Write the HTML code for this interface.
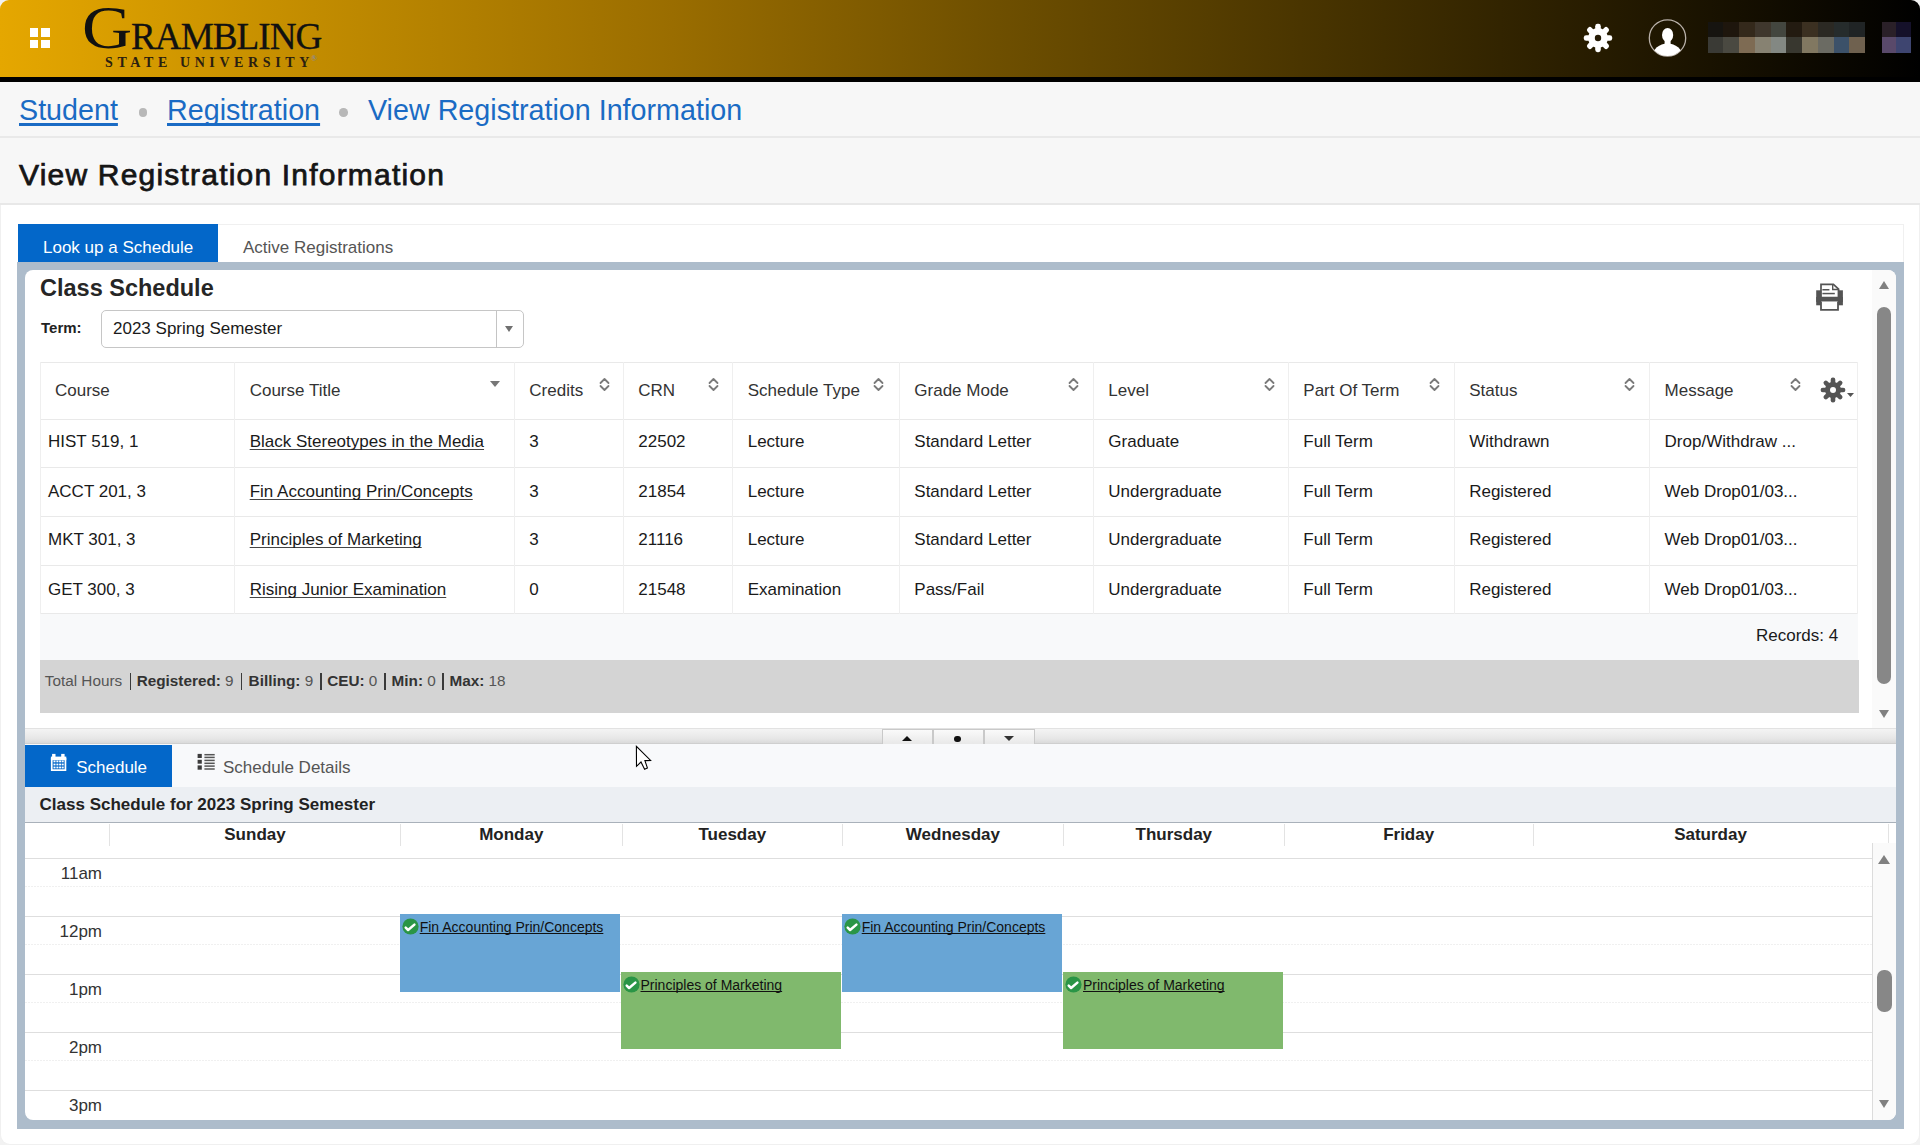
<!DOCTYPE html>
<html><head><meta charset="utf-8">
<style>
*{box-sizing:border-box;margin:0;padding:0}
html,body{width:1920px;height:1145px;overflow:hidden;background:#f2f2f2;font-family:"Liberation Sans",sans-serif}
.a{position:absolute}
#hdr{left:0;top:0;width:1920px;height:77px;border-radius:9px 9px 0 0;background:linear-gradient(90deg,#e5a700 0%,#9a6d00 35%,#6e4f00 52%,#000 100%)}
#hdr i{position:absolute;width:16.05px;height:15.6px}
#blk{left:0;top:77px;width:1920px;height:5px;background:#000}
#bc{left:0;top:82px;width:1920px;height:56px;background:#f7f7f7;border-bottom:2px solid #e9e9e9}
#ttl{left:0;top:138px;width:1920px;height:67px;background:#f7f7f7;border-bottom:2px solid #e8e8e8}
#cont{left:0;top:205px;width:1920px;height:940px;background:#fff;border:1px solid #f0f0f0;border-top:none;border-radius:0 0 10px 10px}
.sq{position:absolute;width:8.5px;height:8.5px;background:#fff}
.serif{font-family:"Liberation Serif",serif}
.lnk{text-decoration:underline;text-decoration-thickness:2.6px;text-underline-offset:2.5px}
.dot{display:inline-block;width:9px;height:9px;border-radius:50%;background:#b5b5b5;vertical-align:middle}
#tabs{left:18px;top:224px;width:1886px;height:38px;border:1px solid #f0f0f0;border-bottom:none;background:#fff}
.tab{position:absolute;top:0;height:38px;font-size:17px;line-height:38px;white-space:nowrap}
#frame{left:17px;top:262px;width:1887px;height:866.5px;background:#adbccb}
#top{left:25px;top:270px;width:1871px;height:458px;background:#fff;border-radius:8px 8px 0 0;overflow:hidden}
#bot{left:25px;top:744px;width:1871px;height:376px;background:#fff;border-radius:0 0 8px 8px;overflow:hidden}

.t{position:absolute;white-space:nowrap;text-decoration-skip-ink:none}
.u{text-decoration:underline;text-decoration-thickness:1px;text-underline-offset:2px}
</style></head><body>
<div id="hdr" class="a">
<div class="sq" style="left:29.5px;top:28px"></div><div class="sq" style="left:41px;top:28px"></div><div class="sq" style="left:29.5px;top:39.8px"></div><div class="sq" style="left:41px;top:39.8px"></div>
<div class="a serif" style="left:81.5px;top:-4px;font-size:62px;line-height:62px;color:#111;transform:scaleX(1.12);transform-origin:0 0">G</div>
<div class="a serif" style="left:131px;top:17px;font-size:37.2px;line-height:40px;color:#111;letter-spacing:-1px;-webkit-text-stroke:0.3px #111">RAMBLING</div>
<div class="a serif" style="left:105px;top:56px;font-size:14px;line-height:14px;color:#2a2010;letter-spacing:4.6px;font-weight:bold;white-space:nowrap">STATE UNIVERSITY<span style="position:absolute;left:206px;top:-1px;font-size:8px;line-height:8px;letter-spacing:0;color:#8a8a9a">&reg;</span></div>
<svg class="a" style="left:1583px;top:23px" width="30" height="30" viewBox="0 0 30 30"><g fill="#fff"><circle cx="15" cy="15" r="9.9"/><g id="tooth"><rect x="12.2" y="0.8" width="5.6" height="8" rx="2.4"/></g><use href="#tooth" transform="rotate(45 15 15)"/><use href="#tooth" transform="rotate(90 15 15)"/><use href="#tooth" transform="rotate(135 15 15)"/><use href="#tooth" transform="rotate(180 15 15)"/><use href="#tooth" transform="rotate(225 15 15)"/><use href="#tooth" transform="rotate(270 15 15)"/><use href="#tooth" transform="rotate(315 15 15)"/></g><circle cx="15" cy="15" r="3.2" fill="#261c06"/></svg>
<svg class="a" style="left:1648px;top:19px" width="39" height="39" viewBox="0 0 39 39"><defs><clipPath id="uc"><circle cx="19.5" cy="19" r="18"/></clipPath></defs><circle cx="19.5" cy="19" r="18.2" fill="none" stroke="#b8b0a8" stroke-width="1.3"/><g clip-path="url(#uc)" fill="#fff"><ellipse cx="19.6" cy="16" rx="5.6" ry="6.9"/><rect x="16.6" y="19" width="6" height="7.5"/><ellipse cx="19.5" cy="37.5" rx="15" ry="13"/></g></svg>
<i style="left:1707.50px;top:21.5px;background:#161410"></i><i style="left:1707.50px;top:37px;background:#3a3a35"></i><i style="left:1723.25px;top:21.5px;background:#1e160d"></i><i style="left:1723.25px;top:37px;background:#4a4941"></i><i style="left:1739.00px;top:21.5px;background:#34291b"></i><i style="left:1739.00px;top:37px;background:#7e6b53"></i><i style="left:1754.75px;top:21.5px;background:#3f372d"></i><i style="left:1754.75px;top:37px;background:#878272"></i><i style="left:1770.50px;top:21.5px;background:#43463f"></i><i style="left:1770.50px;top:37px;background:#838883"></i><i style="left:1786.25px;top:21.5px;background:#231b11"></i><i style="left:1786.25px;top:37px;background:#38372f"></i><i style="left:1802.00px;top:21.5px;background:#3b3021"></i><i style="left:1802.00px;top:37px;background:#817861"></i><i style="left:1817.75px;top:21.5px;background:#2b2923"></i><i style="left:1817.75px;top:37px;background:#6b6b63"></i><i style="left:1833.50px;top:21.5px;background:#262c2c"></i><i style="left:1833.50px;top:37px;background:#3c5169"></i><i style="left:1849.25px;top:21.5px;background:#202425"></i><i style="left:1849.25px;top:37px;background:#6f614f"></i><i style="left:1881.50px;top:21.5px;width:14.8px;background:#2a2028"></i><i style="left:1881.50px;top:37px;width:14.8px;background:#59496a"></i><i style="left:1896.00px;top:21.5px;width:14.8px;background:#15112a"></i><i style="left:1896.00px;top:37px;width:14.8px;background:#3e4570"></i>
</div>
<div id="blk" class="a"></div><div id="bc" class="a"></div><div id="ttl" class="a"></div><div id="cont" class="a"></div>
<div class="t " style="left:19.00px;top:95.71px;font-size:28.7px;line-height:28.7px;font-weight:normal;color:#1a6bc4;"><span class="lnk">Student</span></div>
<div class="t " style="left:167.00px;top:95.71px;font-size:28.7px;line-height:28.7px;font-weight:normal;color:#1a6bc4;"><span class="lnk">Registration</span></div>
<div class="t " style="left:368.00px;top:95.71px;font-size:28.7px;line-height:28.7px;font-weight:normal;color:#1a6bc4;">View Registration Information</div>
<div class="a" style="left:138.70px;top:108.20px;width:8.60px;height:8.60px;background:#b8b8b8;border-radius:50%"></div>
<div class="a" style="left:339.20px;top:108.20px;width:8.60px;height:8.60px;background:#b8b8b8;border-radius:50%"></div>
<div class="t " style="left:19.00px;top:159.60px;font-size:30px;line-height:30px;font-weight:normal;color:#151515;-webkit-text-stroke:0.75px #151515;letter-spacing:1.2px">View Registration Information</div>
<div id="tabs" class="a"></div>
<div class="a" style="left:18.00px;top:224.00px;width:200.00px;height:38.00px;background:#0367c9"></div>
<div class="t " style="left:43.00px;top:238.91px;font-size:17px;line-height:17px;font-weight:normal;color:#fff;">Look up a Schedule</div>
<div class="t " style="left:243.00px;top:238.91px;font-size:17px;line-height:17px;font-weight:normal;color:#555;">Active Registrations</div>
<div id="frame" class="a"></div>
<div id="top" class="a"></div>
<div id="bot" class="a"></div>
<div class="t " style="left:40.00px;top:276.81px;font-size:23.5px;line-height:23.5px;font-weight:bold;color:#262626;">Class Schedule</div>
<div class="t " style="left:41.00px;top:320.10px;font-size:15px;line-height:15px;font-weight:bold;color:#222;">Term:</div>
<div class="a" style="left:101.00px;top:310.00px;width:422.50px;height:38.00px;border:1px solid #c6c6c6;border-radius:5px;background:#fff"></div>
<div class="a" style="left:495.90px;top:310.50px;width:1.10px;height:37.00px;background:#c4c4c4"></div>
<div class="a" style="left:505.3px;top:325.5px;width:0;height:0;border-left:4.3px solid transparent;border-right:4.3px solid transparent;border-top:6.8px solid #707070"></div>
<div class="t " style="left:113.00px;top:319.91px;font-size:17px;line-height:17px;font-weight:normal;color:#1a1a1a;">2023 Spring Semester</div>
<svg class="a" style="left:1805px;top:275px" width="50" height="45" viewBox="0 0 50 45"><g fill="#545454"><rect x="11.2" y="15.3" width="5" height="15"/><rect x="32.8" y="15.3" width="5.1" height="15"/><rect x="11.2" y="22" width="26.7" height="4.9"/><rect x="17.4" y="14" width="7" height="1.5"/><rect x="17.4" y="17.8" width="12.4" height="1.5"/></g><path d="M16 9.3H28.4L33.6 14.1V22.5H16Z" fill="none" stroke="#545454" stroke-width="1.7"/><path d="M27.7 9.5V14.5H33.4" fill="none" stroke="#545454" stroke-width="1.4"/><path d="M16 26.5V34.8H33V26.5" fill="#fff" stroke="#545454" stroke-width="1.8"/></svg>
<div class="a" style="left:40.00px;top:362.00px;width:1817.00px;height:251.50px;background:#fff"></div>
<div class="a" style="left:40.00px;top:361.80px;width:1817.00px;height:1.00px;background:#e9e9e9"></div>
<div class="a" style="left:40.00px;top:418.50px;width:1817.00px;height:1.00px;background:#e9e9e9"></div>
<div class="a" style="left:40.00px;top:466.80px;width:1817.00px;height:1.00px;background:#e9e9e9"></div>
<div class="a" style="left:40.00px;top:516.20px;width:1817.00px;height:1.00px;background:#e9e9e9"></div>
<div class="a" style="left:40.00px;top:564.50px;width:1817.00px;height:1.00px;background:#e9e9e9"></div>
<div class="a" style="left:40.00px;top:612.80px;width:1817.00px;height:1.00px;background:#e9e9e9"></div>
<div class="a" style="left:39.50px;top:362.00px;width:1.00px;height:251.50px;background:#efefef"></div>
<div class="a" style="left:234.20px;top:362.00px;width:1.00px;height:251.50px;background:#efefef"></div>
<div class="a" style="left:513.80px;top:362.00px;width:1.00px;height:251.50px;background:#efefef"></div>
<div class="a" style="left:622.80px;top:362.00px;width:1.00px;height:251.50px;background:#efefef"></div>
<div class="a" style="left:732.20px;top:362.00px;width:1.00px;height:251.50px;background:#efefef"></div>
<div class="a" style="left:898.80px;top:362.00px;width:1.00px;height:251.50px;background:#efefef"></div>
<div class="a" style="left:1092.80px;top:362.00px;width:1.00px;height:251.50px;background:#efefef"></div>
<div class="a" style="left:1287.80px;top:362.00px;width:1.00px;height:251.50px;background:#efefef"></div>
<div class="a" style="left:1453.70px;top:362.00px;width:1.00px;height:251.50px;background:#efefef"></div>
<div class="a" style="left:1649.10px;top:362.00px;width:1.00px;height:251.50px;background:#efefef"></div>
<div class="a" style="left:1856.50px;top:362.00px;width:1.00px;height:251.50px;background:#efefef"></div>
<div class="t " style="left:55.00px;top:382.31px;font-size:17px;line-height:17px;font-weight:normal;color:#333;">Course</div>
<div class="t " style="left:249.70px;top:382.31px;font-size:17px;line-height:17px;font-weight:normal;color:#333;">Course Title</div>
<div class="t " style="left:529.30px;top:382.31px;font-size:17px;line-height:17px;font-weight:normal;color:#333;">Credits</div>
<div class="t " style="left:638.30px;top:382.31px;font-size:17px;line-height:17px;font-weight:normal;color:#333;">CRN</div>
<div class="t " style="left:747.70px;top:382.31px;font-size:17px;line-height:17px;font-weight:normal;color:#333;">Schedule Type</div>
<div class="t " style="left:914.30px;top:382.31px;font-size:17px;line-height:17px;font-weight:normal;color:#333;">Grade Mode</div>
<div class="t " style="left:1108.30px;top:382.31px;font-size:17px;line-height:17px;font-weight:normal;color:#333;">Level</div>
<div class="t " style="left:1303.30px;top:382.31px;font-size:17px;line-height:17px;font-weight:normal;color:#333;">Part Of Term</div>
<div class="t " style="left:1469.20px;top:382.31px;font-size:17px;line-height:17px;font-weight:normal;color:#333;">Status</div>
<div class="t " style="left:1664.60px;top:382.31px;font-size:17px;line-height:17px;font-weight:normal;color:#333;">Message</div>
<div class="t " style="left:48.00px;top:433.31px;font-size:17px;line-height:17px;font-weight:normal;color:#1a1a1a;">HIST 519, 1</div>
<div class="t " style="left:249.70px;top:433.31px;font-size:17px;line-height:17px;font-weight:normal;color:#1a1a1a;text-decoration:underline;text-underline-offset:1.5px;text-decoration-color:#444">Black Stereotypes in the Media</div>
<div class="t " style="left:529.30px;top:433.31px;font-size:17px;line-height:17px;font-weight:normal;color:#1a1a1a;">3</div>
<div class="t " style="left:638.30px;top:433.31px;font-size:17px;line-height:17px;font-weight:normal;color:#1a1a1a;">22502</div>
<div class="t " style="left:747.70px;top:433.31px;font-size:17px;line-height:17px;font-weight:normal;color:#1a1a1a;">Lecture</div>
<div class="t " style="left:914.30px;top:433.31px;font-size:17px;line-height:17px;font-weight:normal;color:#1a1a1a;">Standard Letter</div>
<div class="t " style="left:1108.30px;top:433.31px;font-size:17px;line-height:17px;font-weight:normal;color:#1a1a1a;">Graduate</div>
<div class="t " style="left:1303.30px;top:433.31px;font-size:17px;line-height:17px;font-weight:normal;color:#1a1a1a;">Full Term</div>
<div class="t " style="left:1469.20px;top:433.31px;font-size:17px;line-height:17px;font-weight:normal;color:#1a1a1a;">Withdrawn</div>
<div class="t " style="left:1664.60px;top:433.31px;font-size:17px;line-height:17px;font-weight:normal;color:#1a1a1a;">Drop/Withdraw ...</div>
<div class="t " style="left:48.00px;top:483.11px;font-size:17px;line-height:17px;font-weight:normal;color:#1a1a1a;">ACCT 201, 3</div>
<div class="t " style="left:249.70px;top:483.11px;font-size:17px;line-height:17px;font-weight:normal;color:#1a1a1a;text-decoration:underline;text-underline-offset:1.5px;text-decoration-color:#444">Fin Accounting Prin/Concepts</div>
<div class="t " style="left:529.30px;top:483.11px;font-size:17px;line-height:17px;font-weight:normal;color:#1a1a1a;">3</div>
<div class="t " style="left:638.30px;top:483.11px;font-size:17px;line-height:17px;font-weight:normal;color:#1a1a1a;">21854</div>
<div class="t " style="left:747.70px;top:483.11px;font-size:17px;line-height:17px;font-weight:normal;color:#1a1a1a;">Lecture</div>
<div class="t " style="left:914.30px;top:483.11px;font-size:17px;line-height:17px;font-weight:normal;color:#1a1a1a;">Standard Letter</div>
<div class="t " style="left:1108.30px;top:483.11px;font-size:17px;line-height:17px;font-weight:normal;color:#1a1a1a;">Undergraduate</div>
<div class="t " style="left:1303.30px;top:483.11px;font-size:17px;line-height:17px;font-weight:normal;color:#1a1a1a;">Full Term</div>
<div class="t " style="left:1469.20px;top:483.11px;font-size:17px;line-height:17px;font-weight:normal;color:#1a1a1a;">Registered</div>
<div class="t " style="left:1664.60px;top:483.11px;font-size:17px;line-height:17px;font-weight:normal;color:#1a1a1a;">Web Drop01/03...</div>
<div class="t " style="left:48.00px;top:531.11px;font-size:17px;line-height:17px;font-weight:normal;color:#1a1a1a;">MKT 301, 3</div>
<div class="t " style="left:249.70px;top:531.11px;font-size:17px;line-height:17px;font-weight:normal;color:#1a1a1a;text-decoration:underline;text-underline-offset:1.5px;text-decoration-color:#444">Principles of Marketing</div>
<div class="t " style="left:529.30px;top:531.11px;font-size:17px;line-height:17px;font-weight:normal;color:#1a1a1a;">3</div>
<div class="t " style="left:638.30px;top:531.11px;font-size:17px;line-height:17px;font-weight:normal;color:#1a1a1a;">21116</div>
<div class="t " style="left:747.70px;top:531.11px;font-size:17px;line-height:17px;font-weight:normal;color:#1a1a1a;">Lecture</div>
<div class="t " style="left:914.30px;top:531.11px;font-size:17px;line-height:17px;font-weight:normal;color:#1a1a1a;">Standard Letter</div>
<div class="t " style="left:1108.30px;top:531.11px;font-size:17px;line-height:17px;font-weight:normal;color:#1a1a1a;">Undergraduate</div>
<div class="t " style="left:1303.30px;top:531.11px;font-size:17px;line-height:17px;font-weight:normal;color:#1a1a1a;">Full Term</div>
<div class="t " style="left:1469.20px;top:531.11px;font-size:17px;line-height:17px;font-weight:normal;color:#1a1a1a;">Registered</div>
<div class="t " style="left:1664.60px;top:531.11px;font-size:17px;line-height:17px;font-weight:normal;color:#1a1a1a;">Web Drop01/03...</div>
<div class="t " style="left:48.00px;top:580.91px;font-size:17px;line-height:17px;font-weight:normal;color:#1a1a1a;">GET 300, 3</div>
<div class="t " style="left:249.70px;top:580.91px;font-size:17px;line-height:17px;font-weight:normal;color:#1a1a1a;text-decoration:underline;text-underline-offset:1.5px;text-decoration-color:#444">Rising Junior Examination</div>
<div class="t " style="left:529.30px;top:580.91px;font-size:17px;line-height:17px;font-weight:normal;color:#1a1a1a;">0</div>
<div class="t " style="left:638.30px;top:580.91px;font-size:17px;line-height:17px;font-weight:normal;color:#1a1a1a;">21548</div>
<div class="t " style="left:747.70px;top:580.91px;font-size:17px;line-height:17px;font-weight:normal;color:#1a1a1a;">Examination</div>
<div class="t " style="left:914.30px;top:580.91px;font-size:17px;line-height:17px;font-weight:normal;color:#1a1a1a;">Pass/Fail</div>
<div class="t " style="left:1108.30px;top:580.91px;font-size:17px;line-height:17px;font-weight:normal;color:#1a1a1a;">Undergraduate</div>
<div class="t " style="left:1303.30px;top:580.91px;font-size:17px;line-height:17px;font-weight:normal;color:#1a1a1a;">Full Term</div>
<div class="t " style="left:1469.20px;top:580.91px;font-size:17px;line-height:17px;font-weight:normal;color:#1a1a1a;">Registered</div>
<div class="t " style="left:1664.60px;top:580.91px;font-size:17px;line-height:17px;font-weight:normal;color:#1a1a1a;">Web Drop01/03...</div>
<svg class="a" style="left:599.00px;top:376.70px" width="11" height="15" viewBox="0 0 11 15"><path d="M1.5 6 5.5 2 9.5 6M1.5 9 5.5 13 9.5 9" fill="none" stroke="#7a7a7a" stroke-width="1.8" stroke-linecap="round" stroke-linejoin="round"/></svg>
<svg class="a" style="left:708.00px;top:376.70px" width="11" height="15" viewBox="0 0 11 15"><path d="M1.5 6 5.5 2 9.5 6M1.5 9 5.5 13 9.5 9" fill="none" stroke="#7a7a7a" stroke-width="1.8" stroke-linecap="round" stroke-linejoin="round"/></svg>
<svg class="a" style="left:873.30px;top:376.70px" width="11" height="15" viewBox="0 0 11 15"><path d="M1.5 6 5.5 2 9.5 6M1.5 9 5.5 13 9.5 9" fill="none" stroke="#7a7a7a" stroke-width="1.8" stroke-linecap="round" stroke-linejoin="round"/></svg>
<svg class="a" style="left:1068.30px;top:376.70px" width="11" height="15" viewBox="0 0 11 15"><path d="M1.5 6 5.5 2 9.5 6M1.5 9 5.5 13 9.5 9" fill="none" stroke="#7a7a7a" stroke-width="1.8" stroke-linecap="round" stroke-linejoin="round"/></svg>
<svg class="a" style="left:1264.00px;top:376.70px" width="11" height="15" viewBox="0 0 11 15"><path d="M1.5 6 5.5 2 9.5 6M1.5 9 5.5 13 9.5 9" fill="none" stroke="#7a7a7a" stroke-width="1.8" stroke-linecap="round" stroke-linejoin="round"/></svg>
<svg class="a" style="left:1429.40px;top:376.70px" width="11" height="15" viewBox="0 0 11 15"><path d="M1.5 6 5.5 2 9.5 6M1.5 9 5.5 13 9.5 9" fill="none" stroke="#7a7a7a" stroke-width="1.8" stroke-linecap="round" stroke-linejoin="round"/></svg>
<svg class="a" style="left:1624.40px;top:376.70px" width="11" height="15" viewBox="0 0 11 15"><path d="M1.5 6 5.5 2 9.5 6M1.5 9 5.5 13 9.5 9" fill="none" stroke="#7a7a7a" stroke-width="1.8" stroke-linecap="round" stroke-linejoin="round"/></svg>
<svg class="a" style="left:1789.80px;top:376.70px" width="11" height="15" viewBox="0 0 11 15"><path d="M1.5 6 5.5 2 9.5 6M1.5 9 5.5 13 9.5 9" fill="none" stroke="#7a7a7a" stroke-width="1.8" stroke-linecap="round" stroke-linejoin="round"/></svg>
<div class="a" style="left:490px;top:381px;width:0;height:0;border-left:5.5px solid transparent;border-right:5.5px solid transparent;border-top:6.5px solid #777"></div>
<svg class="a" style="left:1819.5px;top:377px" width="35" height="26" viewBox="0 0 35 26"><g fill="#555"><circle cx="13" cy="13" r="8"/><g id="t2"><rect x="10.7" y="0.6" width="4.6" height="7" rx="2.2"/></g><use href="#t2" transform="rotate(45 13 13)"/><use href="#t2" transform="rotate(90 13 13)"/><use href="#t2" transform="rotate(135 13 13)"/><use href="#t2" transform="rotate(180 13 13)"/><use href="#t2" transform="rotate(225 13 13)"/><use href="#t2" transform="rotate(270 13 13)"/><use href="#t2" transform="rotate(315 13 13)"/><path d="M27 16h7l-3.5 4z"/></g><circle cx="13" cy="13" r="3" fill="#fff"/></svg>
<div class="a" style="left:40.00px;top:613.50px;width:1818.00px;height:47.00px;background:#f8f9fa"></div>
<div class="t " style="left:1756.00px;top:627.31px;font-size:17px;line-height:17px;font-weight:normal;color:#1a1a1a;">Records: 4</div>
<div class="a" style="left:39.50px;top:660.00px;width:1819.00px;height:53.00px;background:#d4d4d4"></div>
<div class="t " style="left:44.80px;top:672.85px;font-size:15.3px;line-height:15.3px;font-weight:normal;color:#555;">Total Hours</div>
<div class="t " style="left:136.70px;top:672.85px;font-size:15.3px;line-height:15.3px;font-weight:normal;color:#555;"><b style="color:#333">Registered:</b> 9</div>
<div class="t " style="left:248.60px;top:672.85px;font-size:15.3px;line-height:15.3px;font-weight:normal;color:#555;"><b style="color:#333">Billing:</b> 9</div>
<div class="t " style="left:327.20px;top:672.85px;font-size:15.3px;line-height:15.3px;font-weight:normal;color:#555;"><b style="color:#333">CEU:</b> 0</div>
<div class="t " style="left:391.60px;top:672.85px;font-size:15.3px;line-height:15.3px;font-weight:normal;color:#555;"><b style="color:#333">Min:</b> 0</div>
<div class="t " style="left:449.50px;top:672.85px;font-size:15.3px;line-height:15.3px;font-weight:normal;color:#555;"><b style="color:#333">Max:</b> 18</div>
<div class="a" style="left:129.70px;top:673.00px;width:1.80px;height:16.50px;background:#3a3a3a"></div>
<div class="a" style="left:240.60px;top:673.00px;width:1.80px;height:16.50px;background:#3a3a3a"></div>
<div class="a" style="left:319.90px;top:673.00px;width:1.80px;height:16.50px;background:#3a3a3a"></div>
<div class="a" style="left:383.90px;top:673.00px;width:1.80px;height:16.50px;background:#3a3a3a"></div>
<div class="a" style="left:442.00px;top:673.00px;width:1.80px;height:16.50px;background:#3a3a3a"></div>
<div class="a" style="left:1872.00px;top:270.00px;width:24.00px;height:458.00px;background:#fafafa;border-radius:0 8px 0 0"></div>
<div class="a" style="left:1878.5px;top:281px;width:0;height:0;border-left:5.7px solid transparent;border-right:5.7px solid transparent;border-bottom:8px solid #808080"></div>
<div class="a" style="left:1877.00px;top:307.00px;width:14.20px;height:376.50px;background:#878787;border-radius:7px"></div>
<div class="a" style="left:1878.5px;top:709.5px;width:0;height:0;border-left:5.7px solid transparent;border-right:5.7px solid transparent;border-top:8.5px solid #808080"></div>
<div class="a" style="left:25.00px;top:728.00px;width:1871.00px;height:16.00px;background:linear-gradient(#f4f4f4,#e6e6e6 70%,#dadada);border-top:1px solid #e2e2e2;border-bottom:1px solid #cfcfcf"></div>
<div class="a" style="left:881.50px;top:729.00px;width:51.00px;height:14.50px;background:linear-gradient(#fafafa,#e8e8e8);border:1px solid #c9c9c9;border-bottom:none"></div>
<div class="a" style="left:932.50px;top:729.00px;width:51.00px;height:14.50px;background:linear-gradient(#fafafa,#e8e8e8);border:1px solid #c9c9c9;border-bottom:none"></div>
<div class="a" style="left:984.00px;top:729.00px;width:51.00px;height:14.50px;background:linear-gradient(#fafafa,#e8e8e8);border:1px solid #c9c9c9;border-bottom:none"></div>
<div class="a" style="left:901.5px;top:735.5px;width:0;height:0;border-left:5.5px solid transparent;border-right:5.5px solid transparent;border-bottom:5px solid #111"></div>
<div class="a" style="left:954.20px;top:735.70px;width:6.40px;height:6.40px;background:#111;border-radius:50%"></div>
<div class="a" style="left:1004px;top:736px;width:0;height:0;border-left:5px solid transparent;border-right:5px solid transparent;border-top:5.5px solid #333"></div>
<div class="a" style="left:25.00px;top:744.00px;width:1871.00px;height:43.00px;background:#f8f9fb"></div>
<div class="a" style="left:25.00px;top:745.00px;width:147.00px;height:42.00px;background:#0367c9"></div>
<svg class="a" style="left:44px;top:748px" width="30" height="30" viewBox="0 0 30 30"><g fill="#fff"><rect x="6.9" y="8.6" width="15.4" height="3.6"/><rect x="8.1" y="5.9" width="3.4" height="3.6"/><rect x="17.2" y="5.9" width="3.4" height="3.6"/><rect x="9.5" y="12.5" width="2" height="1.8"/><rect x="12.4" y="12.5" width="2" height="1.8"/><rect x="15.1" y="12.5" width="2" height="1.8"/><rect x="17.7" y="12.5" width="2" height="1.8"/><rect x="9.5" y="15.6" width="2" height="1.8"/><rect x="12.4" y="15.6" width="2" height="1.8"/><rect x="15.1" y="15.6" width="2" height="1.8"/><rect x="17.7" y="15.6" width="2" height="1.8"/><rect x="9.5" y="18.6" width="2" height="1.8"/><rect x="12.4" y="18.6" width="2" height="1.8"/><rect x="15.1" y="18.6" width="2" height="1.8"/><rect x="17.7" y="18.6" width="2" height="1.8"/></g><path d="M7.75 10V22.2H21.45V10" fill="none" stroke="#fff" stroke-width="1.7"/></svg>
<div class="t " style="left:76.20px;top:759.36px;font-size:17px;line-height:17px;font-weight:normal;color:#fff;">Schedule</div>
<svg class="a" style="left:192px;top:748px" width="30" height="30" viewBox="0 0 30 30"><g fill="#3c3c3c"><rect x="5.6" y="5.9" width="4.2" height="4.1"/><rect x="5.6" y="11.8" width="4.2" height="3.9"/><rect x="5.6" y="17.4" width="4.2" height="4.3"/></g><g fill="#555"><rect x="12.4" y="5.95" width="10.3" height="1.5"/><rect x="12.4" y="8.65" width="10.3" height="1.5"/><rect x="12.4" y="11.65" width="10.3" height="1.5"/><rect x="12.4" y="14.55" width="10.3" height="1.5"/><rect x="12.4" y="17.35" width="10.3" height="1.5"/><rect x="12.4" y="20.25" width="10.3" height="1.5"/></g></svg>
<div class="t " style="left:223.00px;top:759.36px;font-size:17px;line-height:17px;font-weight:normal;color:#555;">Schedule Details</div>
<div class="a" style="left:25.00px;top:787.00px;width:1871.00px;height:36.30px;background:#eceff3;border-bottom:1.6px solid #a9b1ba"></div>
<div class="t " style="left:39.60px;top:796.21px;font-size:17px;line-height:17px;font-weight:bold;color:#222;">Class Schedule for 2023 Spring Semester</div>
<div class="a" style="left:108.90px;top:824.00px;width:1.00px;height:22.00px;background:#e3e3e3"></div>
<div class="a" style="left:400.10px;top:824.00px;width:1.00px;height:22.00px;background:#e3e3e3"></div>
<div class="a" style="left:621.50px;top:824.00px;width:1.00px;height:22.00px;background:#e3e3e3"></div>
<div class="a" style="left:842.10px;top:824.00px;width:1.00px;height:22.00px;background:#e3e3e3"></div>
<div class="a" style="left:1062.80px;top:824.00px;width:1.00px;height:22.00px;background:#e3e3e3"></div>
<div class="a" style="left:1283.80px;top:824.00px;width:1.00px;height:22.00px;background:#e3e3e3"></div>
<div class="a" style="left:1532.50px;top:824.00px;width:1.00px;height:22.00px;background:#e3e3e3"></div>
<div class="a" style="left:1887.50px;top:824.00px;width:1.00px;height:22.00px;background:#e3e3e3"></div>
<div id="dh" style="position:absolute;left:0;top:0">
<div class="t" style="left:109.40px;width:291.20px;top:826.01px;font-size:17px;line-height:17px;font-weight:bold;color:#222;text-align:center">Sunday</div>
<div class="t" style="left:400.60px;width:221.40px;top:826.01px;font-size:17px;line-height:17px;font-weight:bold;color:#222;text-align:center">Monday</div>
<div class="t" style="left:622.00px;width:220.60px;top:826.01px;font-size:17px;line-height:17px;font-weight:bold;color:#222;text-align:center">Tuesday</div>
<div class="t" style="left:842.60px;width:220.70px;top:826.01px;font-size:17px;line-height:17px;font-weight:bold;color:#222;text-align:center">Wednesday</div>
<div class="t" style="left:1063.30px;width:221.00px;top:826.01px;font-size:17px;line-height:17px;font-weight:bold;color:#222;text-align:center">Thursday</div>
<div class="t" style="left:1284.30px;width:248.70px;top:826.01px;font-size:17px;line-height:17px;font-weight:bold;color:#222;text-align:center">Friday</div>
<div class="t" style="left:1533.00px;width:355.00px;top:826.01px;font-size:17px;line-height:17px;font-weight:bold;color:#222;text-align:center">Saturday</div>
</div>
<div class="a" style="left:25.00px;top:857.50px;width:1847.00px;height:1.00px;background:#dedede"></div>
<div class="a" style="left:25.00px;top:915.70px;width:1847.00px;height:1.00px;background:#dedede"></div>
<div class="a" style="left:25.00px;top:886.20px;width:1847.00px;height:1.00px;background:repeating-linear-gradient(90deg,#f0f0f0 0 2px,transparent 2px 3px)"></div>
<div class="a" style="left:25.00px;top:973.70px;width:1847.00px;height:1.00px;background:#dedede"></div>
<div class="a" style="left:25.00px;top:944.20px;width:1847.00px;height:1.00px;background:repeating-linear-gradient(90deg,#f0f0f0 0 2px,transparent 2px 3px)"></div>
<div class="a" style="left:25.00px;top:1031.70px;width:1847.00px;height:1.00px;background:#dedede"></div>
<div class="a" style="left:25.00px;top:1002.20px;width:1847.00px;height:1.00px;background:repeating-linear-gradient(90deg,#f0f0f0 0 2px,transparent 2px 3px)"></div>
<div class="a" style="left:25.00px;top:1089.70px;width:1847.00px;height:1.00px;background:#dedede"></div>
<div class="a" style="left:25.00px;top:1060.20px;width:1847.00px;height:1.00px;background:repeating-linear-gradient(90deg,#f0f0f0 0 2px,transparent 2px 3px)"></div>
<div class="a" style="left:25.00px;top:1089.50px;width:1847.00px;height:1.00px;background:#dedede"></div>
<div class="t" style="left:30px;width:72px;text-align:right;top:864.61px;font-size:17px;line-height:17px;color:#333">11am</div>
<div class="t" style="left:30px;width:72px;text-align:right;top:922.61px;font-size:17px;line-height:17px;color:#333">12pm</div>
<div class="t" style="left:30px;width:72px;text-align:right;top:980.61px;font-size:17px;line-height:17px;color:#333">1pm</div>
<div class="t" style="left:30px;width:72px;text-align:right;top:1038.61px;font-size:17px;line-height:17px;color:#333">2pm</div>
<div class="t" style="left:30px;width:72px;text-align:right;top:1096.61px;font-size:17px;line-height:17px;color:#333">3pm</div>
<div class="a" style="left:400.00px;top:914.00px;width:220.00px;height:77.75px;background:#68a5d5"></div>
<svg class="a" style="left:401.80px;top:917.80px" width="17" height="17" viewBox="0 0 17 17"><circle cx="8.5" cy="8.5" r="8.1" fill="#2a9546"/><path d="M3.7 9.6 6.1 12 12.4 6.6" fill="none" stroke="#fff" stroke-width="2.5" stroke-linecap="round" stroke-linejoin="round"/></svg>
<div class="t " style="left:419.70px;top:919.65px;font-size:14px;line-height:14px;font-weight:normal;color:#111;text-decoration:underline;text-underline-offset:1px">Fin Accounting Prin/Concepts</div>
<div class="a" style="left:842.00px;top:914.00px;width:220.30px;height:77.75px;background:#68a5d5"></div>
<svg class="a" style="left:843.80px;top:917.80px" width="17" height="17" viewBox="0 0 17 17"><circle cx="8.5" cy="8.5" r="8.1" fill="#2a9546"/><path d="M3.7 9.6 6.1 12 12.4 6.6" fill="none" stroke="#fff" stroke-width="2.5" stroke-linecap="round" stroke-linejoin="round"/></svg>
<div class="t " style="left:861.70px;top:919.65px;font-size:14px;line-height:14px;font-weight:normal;color:#111;text-decoration:underline;text-underline-offset:1px">Fin Accounting Prin/Concepts</div>
<div class="a" style="left:620.80px;top:972.20px;width:219.80px;height:76.80px;background:#80b96d"></div>
<svg class="a" style="left:622.60px;top:976.00px" width="17" height="17" viewBox="0 0 17 17"><circle cx="8.5" cy="8.5" r="8.1" fill="#2a9546"/><path d="M3.7 9.6 6.1 12 12.4 6.6" fill="none" stroke="#fff" stroke-width="2.5" stroke-linecap="round" stroke-linejoin="round"/></svg>
<div class="t " style="left:640.50px;top:977.85px;font-size:14px;line-height:14px;font-weight:normal;color:#111;text-decoration:underline;text-underline-offset:1px">Principles of Marketing</div>
<div class="a" style="left:1063.30px;top:972.20px;width:219.80px;height:76.80px;background:#80b96d"></div>
<svg class="a" style="left:1065.10px;top:976.00px" width="17" height="17" viewBox="0 0 17 17"><circle cx="8.5" cy="8.5" r="8.1" fill="#2a9546"/><path d="M3.7 9.6 6.1 12 12.4 6.6" fill="none" stroke="#fff" stroke-width="2.5" stroke-linecap="round" stroke-linejoin="round"/></svg>
<div class="t " style="left:1083.00px;top:977.85px;font-size:14px;line-height:14px;font-weight:normal;color:#111;text-decoration:underline;text-underline-offset:1px">Principles of Marketing</div>
<div class="a" style="left:1872.00px;top:843.00px;width:24.00px;height:277.00px;background:#fafafa;border-left:1px solid #dcdcdc;border-radius:0 0 8px 0"></div>
<div class="a" style="left:1878px;top:854.7px;width:0;height:0;border-left:6.2px solid transparent;border-right:6.2px solid transparent;border-bottom:9.2px solid #808080"></div>
<div class="a" style="left:1877.00px;top:970.00px;width:14.50px;height:42.00px;background:#878787;border-radius:7px"></div>
<div class="a" style="left:1878.5px;top:1100px;width:0;height:0;border-left:5.7px solid transparent;border-right:5.7px solid transparent;border-top:8.5px solid #808080"></div>
<svg class="a" style="left:630px;top:740px" width="30" height="36" viewBox="630 740 30 36"><path d="M636.4 746.4 636.5 766.3 641 762 644.6 769.3 647.4 767.9 644.9 760.6 650.6 760.4Z" fill="#fff" stroke="#000" stroke-width="1.1" stroke-linejoin="miter"/></svg>
</body></html>
